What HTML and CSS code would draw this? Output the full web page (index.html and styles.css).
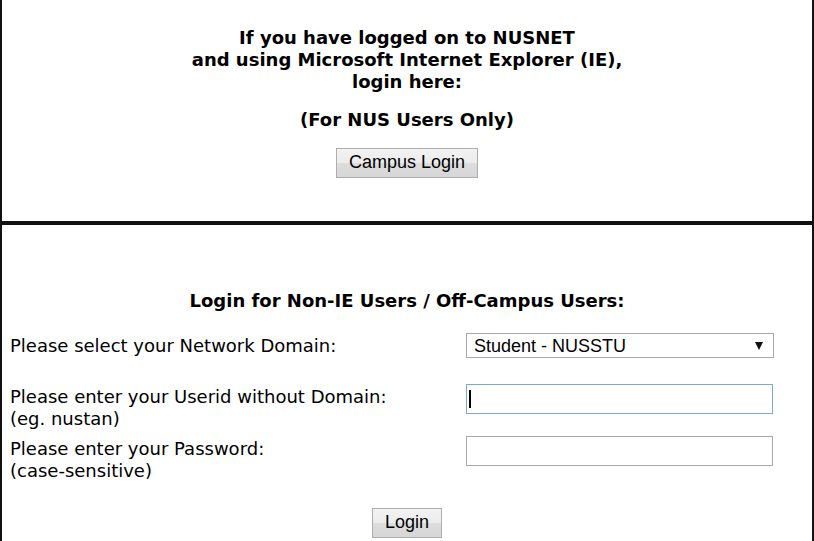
FILE: index.html
```html
<!DOCTYPE html>
<html lang="en">
<head>
  <meta charset="UTF-8">
  <title>NUSNET Login</title>
  <link rel="stylesheet" href="styles.css">
</head>
<body>
  <div class="box campus">
    <p class="title">If you have logged on to NUSNET<br>and using Microsoft Internet Explorer (IE),<br>login here:</p>
    <p class="title">(For NUS Users Only)</p>
    <button class="btn">Campus Login</button>
  </div>

  <div class="box offcampus">
    <h3>Login for Non-IE Users / Off-Campus Users:</h3>
    <div class="form">
      <div class="label">Please select your Network Domain:</div>
      <div class="field">
        <div class="select-wrap">
          <select class="domain">
            <option>Student - NUSSTU</option>
            <option>Staff - NUSSTF</option>
            <option>Extended - NUSEXT</option>
          </select>
        </div>
      </div>

      <div class="label">Please enter your Userid without Domain:<br>(eg. nustan)</div>
      <div class="field">
        <div class="input-wrap">
          <input type="text" class="text active">
          <span class="caret"></span>
        </div>
      </div>

      <div class="label">Please enter your Password:<br>(case-sensitive)</div>
      <div class="field">
        <input type="password" class="text">
      </div>
    </div>
    <div class="submit">
      <button class="btn">Login</button>
    </div>
  </div>
</body>
</html>
```

FILE: styles.css
```css
body {
  margin: 0;
  background: white;
  font-family: "DejaVu Sans", Verdana, sans-serif;
  font-size: 18px;
  line-height: 22px;
  color: #000;
}
.box {
  border-left: 2px solid #111;
  border-right: 2px solid #111;
  text-align: center;
}
.campus {
  padding: 27px 0 43px;
  border-bottom: 2px solid #111;
}
.offcampus {
  border-top: 2px solid #111;
  padding: 65px 0 0;
  height: 400px;
}
.title {
  font-weight: bold;
  margin: 0 0 16px;
}
h3 {
  font-size: 18px;
  margin: 0 0 22px;
}
.btn {
  font-family: "Liberation Sans", Arial, sans-serif;
  font-size: 18px;
  color: #000;
  background: linear-gradient(#f2f2f2, #ebebeb 50%, #dddddd 51%, #d6d6d6);
  border: 1px solid #adadad;
  border-radius: 0;
  padding: 3px 12px 4px;
  line-height: 21px;
  margin-top: 1px;
}
.form {
  display: grid;
  grid-template-columns: 456px 307px;
  padding-left: 8px;
  text-align: left;
}
.label {
  padding-top: 2px;
  margin-bottom: 6px;
}
.form .label:first-child {
  padding-top: 1px;
  margin-bottom: 27px;
}
.select-wrap {
  position: relative;
  width: 308px;
  margin-top: -1px;
}
.select-wrap::after {
  content: "";
  position: absolute;
  right: 11px;
  top: 9px;
  border-left: 4px solid transparent;
  border-right: 4px solid transparent;
  border-top: 8px solid #111;
  pointer-events: none;
}
.domain {
  appearance: none;
  -webkit-appearance: none;
  width: 308px;
  height: 25px;
  font-family: "Liberation Sans", Arial, sans-serif;
  font-size: 18px;
  color: #000;
  background: white;
  border: 1px solid #a9a9a9;
  border-radius: 0;
  padding: 0 0 0 7px;
  margin: 0;
  outline: none;
}
.text {
  box-sizing: border-box;
  width: 307px;
  height: 30px;
  border: 1px solid #a9a9a9;
  padding: 0 3px;
  margin: 0;
  font-size: 16px;
  outline: none;
}
.text.active {
  border-color: #7aa7de;
}
.input-wrap {
  position: relative;
}
.caret {
  position: absolute;
  left: 3px;
  top: 6px;
  width: 2px;
  height: 18px;
  background: #000;
}
.submit {
  margin-top: 19px;
}
```
